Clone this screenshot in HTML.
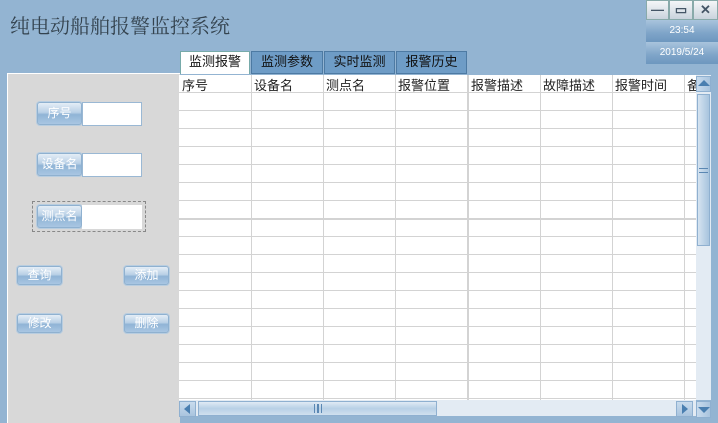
<!DOCTYPE html>
<html><head><meta charset="utf-8"><style>
*{margin:0;padding:0;box-sizing:border-box}
body{width:718px;height:423px;background:#93b4d2;position:relative;overflow:hidden;font-family:"Liberation Sans","Noto Sans CJK SC",sans-serif}
.a{position:absolute}
.title{left:10px;top:10px;font-size:20px;color:#34434f;font-family:"Liberation Serif","Noto Serif CJK SC",serif}
.wb{top:0;height:20px;background:linear-gradient(#f4f6f8,#c9d3dd);border:1px solid #8aa;color:#456;font-size:13px;text-align:center;line-height:18px;font-weight:bold}
.info{left:646px;width:72px;height:22px;background:linear-gradient(#a9c4dd,#7ea4c8 60%,#6d97bf);color:#fff;font-size:10px;text-align:center;line-height:22px}
.tab{top:51px;height:23px;background:#6e9cc6;border:1px solid #4d7aa3;font-size:13px;text-align:center;line-height:20px;color:#111}
.panel{left:7px;top:73px;width:173px;height:350px;background:#d8d8d8;border-top:1px solid #fff;border-left:1px solid #fff}
.btn{height:23px;border:1px solid #8fb1d0;border-radius:3px;background:linear-gradient(#e4edf6,#b9d0e6 45%,#90b4d6 55%,#a9c6e2);color:#fff;font-size:12px;text-align:center;line-height:21px;box-shadow:0 0 0 1px #b8cde0}
.sb{height:19px;line-height:17px}
.inp{height:24px;background:#fff;border:1px solid #9ab8d4}
.grid{left:179px;top:75px;width:517px;height:325px;background:#fff;overflow:hidden}
.hd{position:absolute;top:0;font-size:13px;color:#222;white-space:nowrap}
.hl{position:absolute;left:0;width:517px;height:1px;background:#d3d3d3}
.vl{position:absolute;top:0;width:1px;height:325px;background:#d3d3d3}
</style></head><body>
<div class="a title">纯电动船舶报警监控系统</div>
<div class="a wb" style="left:646px;width:23px">—</div>
<div class="a wb" style="left:669px;width:24px">▭</div>
<div class="a wb" style="left:693px;width:25px">✕</div>
<div class="a info" style="top:20px">23:54</div>
<div class="a info" style="top:42px">2019/5/24</div>
<div class="a tab" style="left:180px;width:70px;background:#fff;border-color:#7aa;border-bottom:none">监测报警</div>
<div class="a tab" style="left:251px;width:72px">监测参数</div>
<div class="a tab" style="left:324px;width:71px">实时监测</div>
<div class="a tab" style="left:396px;width:71px">报警历史</div>
<div class="a panel"></div>
<div class="a btn" style="left:37px;top:102px;width:45px">序号</div>
<div class="a inp" style="left:82px;top:102px;width:60px"></div>
<div class="a btn" style="left:37px;top:153px;width:45px">设备名</div>
<div class="a inp" style="left:82px;top:153px;width:60px"></div>
<div class="a" style="left:32px;top:201px;width:114px;height:31px;border:1px dashed #888"></div>
<div class="a btn" style="left:37px;top:205px;width:45px">测点名</div>
<div class="a inp" style="left:82px;top:205px;width:60px;border-color:#fff"></div>
<div class="a btn sb" style="left:17px;top:266px;width:45px">查询</div>
<div class="a btn sb" style="left:124px;top:266px;width:45px">添加</div>
<div class="a btn sb" style="left:17px;top:314px;width:45px">修改</div>
<div class="a btn sb" style="left:124px;top:314px;width:45px">删除</div>
<div class="a grid">
<div class="hd" style="left:3px">序号</div>
<div class="hd" style="left:75px">设备名</div>
<div class="hd" style="left:147px">测点名</div>
<div class="hd" style="left:219px">报警位置</div>
<div class="hd" style="left:292px">报警描述</div>
<div class="hd" style="left:364px">故障描述</div>
<div class="hd" style="left:436px">报警时间</div>
<div class="hd" style="left:508px">备</div>
<div class="hl" style="top:17px"></div><div class="hl" style="top:35px"></div><div class="hl" style="top:53px"></div><div class="hl" style="top:71px"></div><div class="hl" style="top:89px"></div><div class="hl" style="top:107px"></div><div class="hl" style="top:125px"></div><div class="hl" style="top:143px;height:2px"></div><div class="hl" style="top:161px"></div><div class="hl" style="top:179px"></div><div class="hl" style="top:197px"></div><div class="hl" style="top:215px"></div><div class="hl" style="top:233px"></div><div class="hl" style="top:251px"></div><div class="hl" style="top:269px"></div><div class="hl" style="top:287px"></div><div class="hl" style="top:305px"></div><div class="hl" style="top:323px"></div>
<div class="vl" style="left:72px"></div><div class="vl" style="left:144px"></div><div class="vl" style="left:216px"></div><div class="vl" style="left:288px;width:2px"></div><div class="vl" style="left:361px"></div><div class="vl" style="left:433px"></div><div class="vl" style="left:505px"></div>
</div>
<div class="a" style="left:696px;top:75px;width:15px;height:325px;background:#e3ebf3"></div>
<div class="a" style="left:696px;top:76px;width:15px;height:16px;background:linear-gradient(90deg,#c8dbed,#a9c4de);border:1px solid #8fb0d0"><div style="margin:3px auto 0;width:0;height:0;border-left:6px solid transparent;border-right:6px solid transparent;border-bottom:6px solid #4a7fb0"></div></div>
<div class="a" style="left:697px;top:94px;width:13px;height:152px;background:linear-gradient(90deg,#d5e3f0,#a8c4de);border:1px solid #8fb0d0"></div>
<div class="a" style="left:699px;top:168px;width:9px;height:5px;border-top:1px solid #5a87b3;border-bottom:1px solid #5a87b3"></div>
<div class="a" style="left:179px;top:400px;width:517px;height:16px;background:#e3ebf3"></div>
<div class="a" style="left:179px;top:401px;width:17px;height:16px;background:linear-gradient(#c8dbed,#a9c4de);border:1px solid #8fb0d0"><div style="margin:2px 0 0 4px;width:0;height:0;border-top:5px solid transparent;border-bottom:5px solid transparent;border-right:6px solid #4a7fb0"></div></div>
<div class="a" style="left:198px;top:401px;width:239px;height:15px;background:linear-gradient(#e0eaf4,#b8d0e6 50%,#d0e0ee);border:1px solid #8fb0d0"></div>
<div class="a" style="left:314px;top:404px;width:8px;height:9px;border-left:1px solid #5a87b3;border-right:1px solid #5a87b3"><div style="margin-left:2px;width:2px;height:9px;border-left:1px solid #5a87b3;border-right:1px solid #5a87b3"></div></div>
<div class="a" style="left:676px;top:401px;width:17px;height:16px;background:linear-gradient(#c8dbed,#a9c4de);border:1px solid #8fb0d0"><div style="margin:2px 0 0 5px;width:0;height:0;border-top:5px solid transparent;border-bottom:5px solid transparent;border-left:6px solid #4a7fb0"></div></div>
<div class="a" style="left:696px;top:401px;width:15px;height:17px;background:linear-gradient(90deg,#c8dbed,#a9c4de);border:1px solid #8fb0d0"><div style="margin:5px auto 0;width:0;height:0;border-left:6px solid transparent;border-right:6px solid transparent;border-top:6px solid #4a7fb0"></div></div>
</body></html>
